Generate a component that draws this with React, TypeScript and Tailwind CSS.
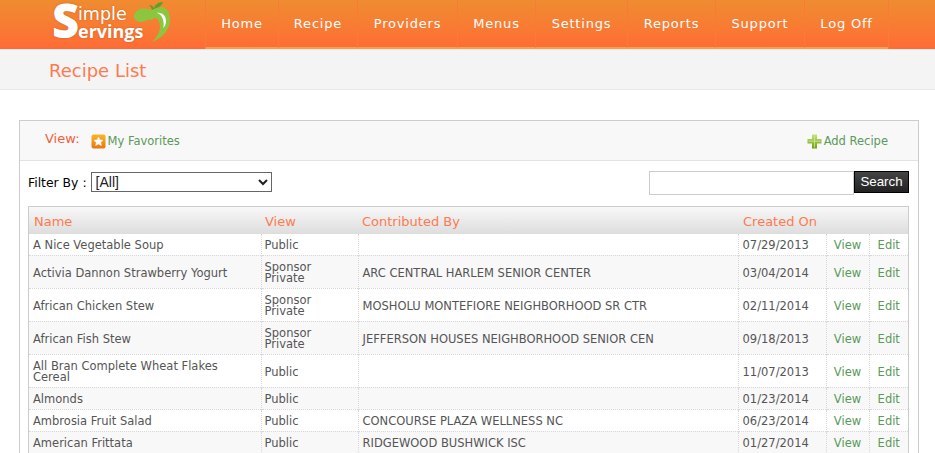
const navItems = [
  { label: 'Home', width: 'w-[73px]' },
  { label: 'Recipe', width: 'w-[79px]' },
  { label: 'Providers', width: 'w-[100px]' },
  { label: 'Menus', width: 'w-[78px]' },
  { label: 'Settings', width: 'w-[92px]' },
  { label: 'Reports', width: 'w-[88px]' },
  { label: 'Support', width: 'w-[89px]' },
  { label: 'Log Off', width: 'w-[84px]' },
];

const recipes = [
  { name: 'A Nice Vegetable Soup', view: ['Public'], by: '', date: '07/29/2013', h: 'h-[21px]' },
  { name: 'Activia Dannon Strawberry Yogurt', view: ['Sponsor', 'Private'], by: 'ARC CENTRAL HARLEM SENIOR CENTER', date: '03/04/2014', h: 'h-[33px]' },
  { name: 'African Chicken Stew', view: ['Sponsor', 'Private'], by: 'MOSHOLU MONTEFIORE NEIGHBORHOOD SR CTR', date: '02/11/2014', h: 'h-[33px]' },
  { name: 'African Fish Stew', view: ['Sponsor', 'Private'], by: 'JEFFERSON HOUSES NEIGHBORHOOD SENIOR CEN', date: '09/18/2013', h: 'h-[33px]' },
  { name: 'All Bran Complete Wheat Flakes Cereal', view: ['Public'], by: '', date: '11/07/2013', h: 'h-[33px]' },
  { name: 'Almonds', view: ['Public'], by: '', date: '01/23/2014', h: 'h-[22px]' },
  { name: 'Ambrosia Fruit Salad', view: ['Public'], by: 'CONCOURSE PLAZA WELLNESS NC', date: '06/23/2014', h: 'h-[22px]' },
  { name: 'American Frittata', view: ['Public'], by: 'RIDGEWOOD BUSHWICK ISC', date: '01/27/2014', h: 'h-[22px]' },
];

const cell = 'border-r border-dotted border-[#d8d8d8] pl-[4px] pr-[2px] pt-[3px] pb-0 align-middle font-normal';

const Logo = () => (
  <div className="relative ml-[52px] h-[49px] w-[153px] shrink-0 text-white [text-shadow:0_0_2px_rgba(160,70,20,0.5)]">
    <span className="absolute left-0 top-0 text-[47px] leading-[40px] font-extrabold font-['Open_Sans',sans-serif]">S</span>
    <span className="absolute left-[26px] top-[6px] text-[17.5px] leading-[16px] font-['DejaVu_Sans',sans-serif]">imple</span>
    <span className="absolute left-[26px] top-[23px] text-[18px] leading-[16px] font-bold font-['Open_Sans',sans-serif]">ervings</span>
    <svg className="absolute left-[80px] top-0" width="40" height="44" viewBox="0 0 40 44">
      <path d="M20 10 C19.5 8 18.5 6 17 5 C19 4.5 21 6 22 8 C23 5 26 2 31 2 C30 5 27 8 22 9 L21 10 Z" fill="#5f9e2a" />
      <path d="M1.5 17 C3 10 8 8 13 8.5 C16 8.7 18 9.5 20 10 C23 8 27 6.5 31 7 C36 9 38 14 38 20 C38 30 30 38 20 42 C28 34 30 26 26 20 C25 18 23 18 22 18 C20 21 17 19 15 20 C13 22 11 21 9 22 C6 22 3 20 1.5 17 Z" fill="#8cc63f" />
      <path d="M24.7 12.7 C30 12.5 34 15 34 21 C34 24 33 26 31.3 28 C32.5 22 31 15 24.7 12.7 Z" fill="#ffffff" />
    </svg>
  </div>
);

const StarIcon = () => (
  <svg width="15" height="15" viewBox="0 0 15 15" className="shrink-0">
    <defs>
      <linearGradient id="starBg" x1="0" y1="0" x2="0" y2="1">
        <stop offset="0" stopColor="#fbb52a" />
        <stop offset="1" stopColor="#e8760f" />
      </linearGradient>
    </defs>
    <rect x="0.5" y="0.5" width="14" height="14" rx="2" fill="url(#starBg)" />
    <path d="M7.5 3l1.4 2.9 3.1.4-2.3 2.1.7 3.1-2.9-1.6-2.9 1.6.7-3.1-2.3-2.1 3.1-.4z" fill="#ffffff" stroke="#ffffff" strokeWidth="0.5" strokeLinejoin="round" />
  </svg>
);

const PlusIcon = () => (
  <svg width="15" height="15" viewBox="0 0 15 15" className="shrink-0">
    <defs>
      <linearGradient id="plusBg" x1="0" y1="0" x2="0" y2="1">
        <stop offset="0" stopColor="#c4e27c" />
        <stop offset="1" stopColor="#6f9f14" />
      </linearGradient>
    </defs>
    <path d="M5 0.5h5v4.5h4.5v4.5h-4.5v5h-5v-5h-4.5v-4.5h4.5z" fill="url(#plusBg)" />
    <path d="M7.5 1.5v12M1.5 7.2h12" stroke="#dcefa8" strokeWidth="1" opacity="0.7" />
  </svg>
);

export default function App() {
  return (
    <div className="h-[453px] overflow-hidden bg-white font-['DejaVu_Sans',sans-serif] text-[11.5px] text-[#555555]">
      <header className="flex h-[49px] bg-gradient-to-b from-[#ef8c30] to-[#ff6b35]">
        <Logo />
        <nav className="flex h-[49px] border-r border-[#f97b35]">
          {navItems.map((item) => (
            <a
              key={item.label}
              className={`${item.width} flex items-center justify-center border-l border-l-[#f97b35] border-b-2 border-b-[#f5a04a] text-[13px] tracking-[0.8px] text-white`}
            >
              {item.label}
            </a>
          ))}
        </nav>
      </header>

      <div className="flex h-[41px] items-center border-t border-t-[#e9e9e9] border-b border-b-[#e8e8e8] bg-[#f4f4f4] pl-[49px] pt-[2px] text-[18px] text-[#ff7a50]">
        Recipe List
      </div>

      <section className="ml-[19px] mr-[16px] mt-[30px] border-x border-t border-[#cccccc]">
        <div className="flex h-[40px] items-center justify-between border-b border-[#e2e2e2] bg-[#f8f8f8] pl-[25px] pr-[30px] pt-[2px]">
          <div className="flex items-center">
            <span className="mb-[6px] mr-[11px] text-[13px] text-[#f0603a]">View:</span>
            <StarIcon />
            <span className="ml-[2px] text-[#5a9a5a]">My Favorites</span>
          </div>
          <div className="flex items-center">
            <PlusIcon />
            <span className="ml-[2px] text-[#5a9a5a]">Add Recipe</span>
          </div>
        </div>

        <div className="flex h-[45px] items-start justify-between pl-[8px] pr-[9px] pt-[10px]">
          <div className="flex items-center text-[12.4px] text-black">
            <span className="mr-[4px] pt-[3px]">Filter By :</span>
            <select className="h-[20px] w-[181px] border border-[#666] bg-white font-['Liberation_Sans',sans-serif] text-[14px] text-[#222]">
              <option>[All]</option>
            </select>
          </div>
          <div className="flex items-start">
            <input className="h-[24px] w-[205px] border border-[#cccccc] bg-white" />
            <button className="h-[22px] w-[55px] border border-black bg-gradient-to-b from-[#444] to-[#222] font-['Liberation_Sans',sans-serif] text-[13.3px] text-white">
              Search
            </button>
          </div>
        </div>

        <div className="ml-[8px] mr-[9px] border-x border-t border-[#cccccc]">
          <table className="w-full table-fixed border-collapse">
            <thead>
              <tr className="h-[27px] bg-gradient-to-b from-[#f8f8f8] to-[#dddddd] text-left text-[13px] text-[#ff7a50]">
                <th className="w-[232px] pl-[5px] pt-[2px] font-normal">Name</th>
                <th className="w-[97px] pl-[4px] pt-[2px] font-normal">View</th>
                <th className="w-[380px] pl-[4px] pt-[2px] font-normal">Contributed By</th>
                <th className="w-[88px] pl-[5px] pt-[2px] font-normal">Created On</th>
                <th className="w-[43px] font-normal" />
                <th className="font-normal" />
              </tr>
            </thead>
            <tbody>
              {recipes.map((r, i) => (
                <tr key={r.name} className={`${r.h} border-b border-dotted border-[#d8d8d8] leading-[11px] ${i % 2 ? 'bg-[#f8f8f8]' : 'bg-white'}`}>
                  <td className={`${cell} !pr-[30px]`}>{r.name}</td>
                  <td className={`${cell} !pl-[3px]`}>
                    {r.view.map((v) => (
                      <div key={v}>{v}</div>
                    ))}
                  </td>
                  <td className={cell}>
                    <span className="whitespace-nowrap">{r.by}</span>
                  </td>
                  <td className={cell}>{r.date}</td>
                  <td className={`${cell} !pr-[4px] text-center text-[#5a9a5a]`}>View</td>
                  <td className="px-[4px] pt-[3px] text-center align-middle text-[#5a9a5a]">Edit</td>
                </tr>
              ))}
            </tbody>
          </table>
        </div>
      </section>
    </div>
  );
}
